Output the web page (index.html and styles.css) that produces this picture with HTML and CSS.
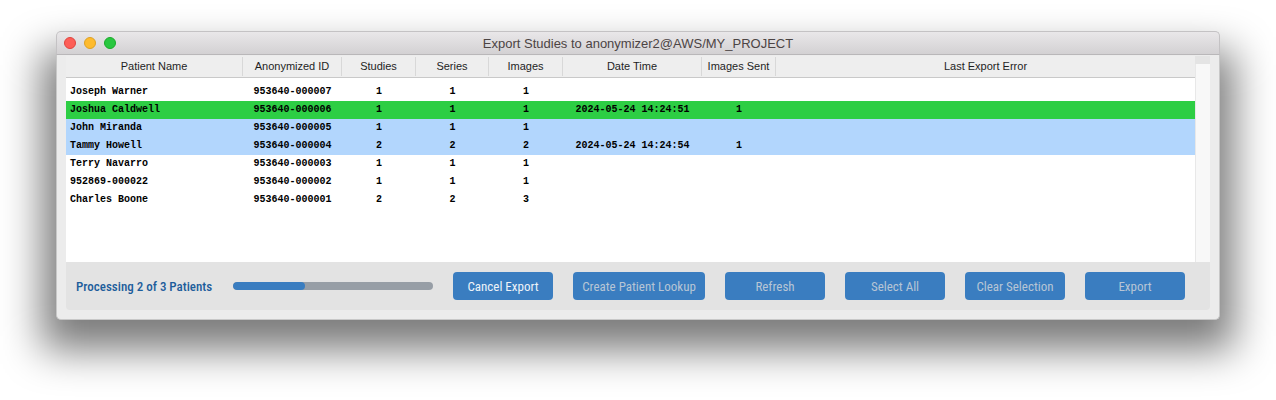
FILE: index.html
```html
<!DOCTYPE html>
<html>
<head>
<meta charset="utf-8">
<link rel="stylesheet" href="styles.css">
</head>
<body>
<div class="window">
  <div class="titlebar">
    <div class="lights">
      <span class="light red"></span>
      <span class="light yellow"></span>
      <span class="light green"></span>
    </div>
    <div class="title">Export Studies to anonymizer2@AWS/MY_PROJECT</div>
  </div>
  <div class="content">
    <div class="tablewrap">
      <div class="table">
        <div class="header cols">
          <div class="hcell">Patient Name</div>
          <div class="hcell">Anonymized ID</div>
          <div class="hcell">Studies</div>
          <div class="hcell">Series</div>
          <div class="hcell">Images</div>
          <div class="hcell">Date Time</div>
          <div class="hcell">Images Sent</div>
          <div class="hcell last">Last Export Error</div>
        </div>
        <div class="body">
          <div class="row cols"><div class="name">Joseph Warner</div><div>953640-000007</div><div>1</div><div>1</div><div>1</div><div></div><div></div><div></div></div>
          <div class="row cols done"><div class="name">Joshua Caldwell</div><div>953640-000006</div><div>1</div><div>1</div><div>1</div><div>2024-05-24 14:24:51</div><div>1</div><div></div></div>
          <div class="row cols sel"><div class="name">John Miranda</div><div>953640-000005</div><div>1</div><div>1</div><div>1</div><div></div><div></div><div></div></div>
          <div class="row cols sel"><div class="name">Tammy Howell</div><div>953640-000004</div><div>2</div><div>2</div><div>2</div><div>2024-05-24 14:24:54</div><div>1</div><div></div></div>
          <div class="row cols"><div class="name">Terry Navarro</div><div>953640-000003</div><div>1</div><div>1</div><div>1</div><div></div><div></div><div></div></div>
          <div class="row cols"><div class="name">952869-000022</div><div>953640-000002</div><div>1</div><div>1</div><div>1</div><div></div><div></div><div></div></div>
          <div class="row cols"><div class="name">Charles Boone</div><div>953640-000001</div><div>2</div><div>2</div><div>3</div><div></div><div></div><div></div></div>
        </div>
      </div>
      <div class="scrollbar">
        <div class="scroll-corner"></div>
        <div class="scroll-track"></div>
      </div>
    </div>
    <div class="panel">
      <div class="status">Processing 2 of 3 Patients</div>
      <div class="progress"><div class="progress-fill" style="width:36%"></div></div>
      <button class="btn active">Cancel Export</button>
      <button class="btn wide">Create Patient Lookup</button>
      <button class="btn">Refresh</button>
      <button class="btn">Select All</button>
      <button class="btn">Clear Selection</button>
      <button class="btn">Export</button>
    </div>
  </div>
</div>
</body>
</html>
```

FILE: styles.css
```css
html, body {
  margin: 0;
  padding: 0;
  background: #ffffff;
}

body {
  padding: 31px 0 0 56px;
  min-height: 400px;
  box-sizing: border-box;
  font-family: "Liberation Sans", Arial, sans-serif;
}

.window {
  position: relative;
  width: 1164px;
  height: 289px;
}

.window::before {
  content: "";
  position: absolute;
  left: -14px;
  right: -14px;
  top: 20px;
  bottom: -30px;
  background: rgba(0, 0, 0, 0.52);
  filter: blur(20px);
  z-index: 0;
}

.window > .titlebar,
.window > .content {
  position: relative;
  z-index: 1;
}

.titlebar {
  height: 24px;
  box-sizing: border-box;
  background: linear-gradient(#e9e7e9, #d3d1d3);
  border: 1px solid #c4c2c4;
  border-bottom-color: #b9b7b9;
  border-radius: 5px 5px 0 0;
  display: flex;
  align-items: center;
}

.lights {
  display: flex;
  gap: 8px;
  padding-left: 7px;
}

.light {
  width: 12px;
  height: 12px;
  border-radius: 50%;
  box-sizing: border-box;
}

.light.red { background: #fd5e57; border: 0.5px solid #e0443e; }
.light.yellow { background: #febb2e; border: 0.5px solid #dea123; }
.light.green { background: #29c740; border: 0.5px solid #1aab29; }

.title {
  flex: 1;
  text-align: center;
  margin-left: -59px;
  font-size: 13px;
  color: #4c4444;
}

.content {
  height: 265px;
  box-sizing: border-box;
  background: #ececec;
  border: 1px solid #c8c8c8;
  border-top: none;
  border-radius: 0 0 5px 5px;
  display: flex;
  flex-direction: column;
  padding: 1px 9px 9px 9px;
}

.tablewrap {
  height: 206px;
  flex-shrink: 0;
  display: flex;
}

.table {
  flex: 1;
  background: #ffffff;
  display: flex;
  flex-direction: column;
}

.cols {
  display: grid;
  grid-template-columns: 177px 99px 74px 73px 74px 139px 74px 1fr;
}

.header {
  height: 22px;
  box-sizing: border-box;
  background: #eeeeee;
  border-bottom: 1px solid #c9c9c9;
}

.hcell {
  margin-top: 1px;
  height: 19px;
  line-height: 18px;
  text-align: center;
  font-size: 11px;
  color: #1e1e1e;
  border-right: 1px solid #d8d8d8;
  white-space: nowrap;
}

.hcell.last {
  border-right: none;
}

.body {
  padding-top: 5px;
  flex: 1;
}

.row {
  height: 18px;
  line-height: 18px;
  font-family: "Liberation Mono", "Courier New", monospace;
  font-weight: bold;
  font-size: 10px;
  color: #000000;
}

.row > div {
  text-align: center;
  white-space: nowrap;
}

.row > div.name {
  text-align: left;
  padding-left: 4px;
}

.row.done {
  background: #2dce44;
}

.row.sel {
  background: #b2d6fd;
}

.scrollbar {
  width: 15px;
  display: flex;
  flex-direction: column;
}

.scroll-corner {
  height: 8px;
  background: #e4e4e4;
}

.scroll-track {
  flex: 1;
  background: #f8f8f8;
  border-left: 1px solid #e8e8e8;
}

.panel {
  height: 48px;
  flex-shrink: 0;
  box-sizing: border-box;
  background: #e3e3e3;
  border-radius: 0 0 4px 4px;
  display: flex;
  align-items: center;
  padding: 0 0 0 10px;
  font-family: "Liberation Sans Narrow", "Roboto Condensed", "DejaVu Sans Condensed", Roboto, sans-serif;
}

.status {
  width: 137px;
  margin-right: 20px;
  font-size: 13px;
  font-weight: 500;
  color: #1d5d9b;
  white-space: nowrap;
}

.progress {
  width: 200px;
  height: 8px;
  border-radius: 4px;
  background: #979ea6;
  margin-right: 20px;
  overflow: hidden;
}

.progress-fill {
  height: 100%;
  background: #3a7dc0;
  border-radius: 4px;
}

.btn {
  width: 100px;
  height: 28px;
  margin-right: 20px;
  border: none;
  border-radius: 4px;
  background: #3a7dc0;
  color: #b7c5d5;
  font-family: inherit;
  font-size: 13px;
  padding: 0;
  white-space: nowrap;
}

.btn.active {
  color: #eef3f8;
}

.btn.wide {
  width: 132px;
}
```
